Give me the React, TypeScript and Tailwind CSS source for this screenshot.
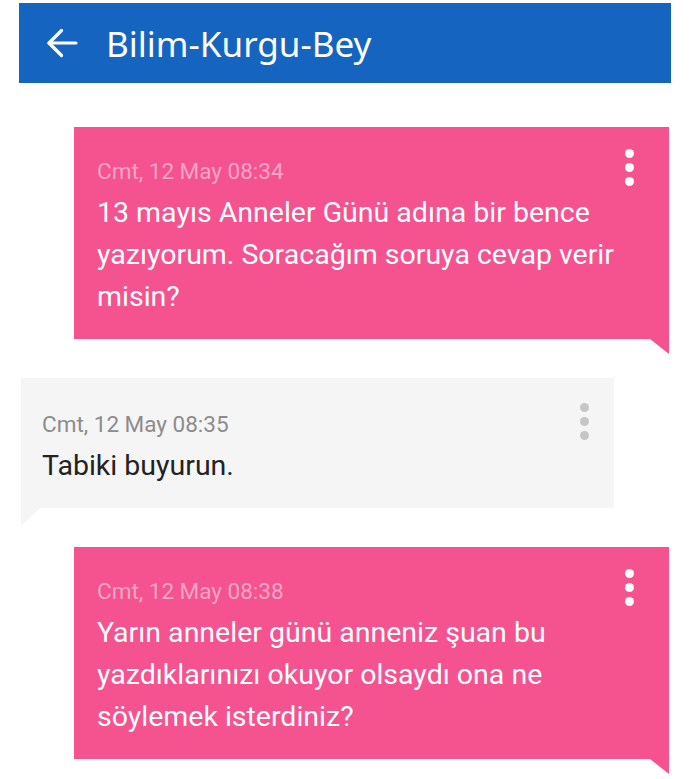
type Msg = { time: string; text: string; mine: boolean };

const messages: Msg[] = [
  {
    time: "Cmt, 12 May 08:34",
    text: "13 mayıs Anneler Günü adına bir bence yazıyorum. Soracağım soruya cevap verir misin?",
    mine: true,
  },
  { time: "Cmt, 12 May 08:35", text: "Tabiki buyurun.", mine: false },
  {
    time: "Cmt, 12 May 08:38",
    text: "Yarın anneler günü anneniz şuan bu yazdıklarınızı okuyor olsaydı ona ne söylemek isterdiniz?",
    mine: true,
  },
];

function Dots({ mine }: { mine: boolean }) {
  const c = mine ? "bg-white" : "bg-[#c6c6c6]";
  return (
    <div
      className={`absolute flex flex-col gap-[5px] ${
        mine ? "top-[22px] right-[35px]" : "top-[25px] right-[25px]"
      }`}
    >
      <span className={`w-[9px] h-[9px] rounded-full ${c}`} />
      <span className={`w-[9px] h-[9px] rounded-full ${c}`} />
      <span className={`w-[9px] h-[9px] rounded-full ${c}`} />
    </div>
  );
}

function Bubble({ msg }: { msg: Msg }) {
  if (msg.mine) {
    return (
      <div className="relative ml-[74px] mr-[21px] bg-[#f55290] pl-[23px] pt-[29px] pb-[21px]">
        <div className="w-[545px]">
          <div className="text-[22.5px] leading-[30px] text-[#fba6c6]">{msg.time}</div>
          <p className="mt-[6px] text-[28.5px] leading-[42px] text-white">{msg.text}</p>
        </div>
        <Dots mine />
        <svg className="absolute right-0 top-full" width="19" height="15" viewBox="0 0 19 15">
          <polygon points="0,0 19,0 19,15" fill="#f55290" />
        </svg>
      </div>
    );
  }
  return (
    <div className="relative ml-[21px] mr-[76px] bg-[#f5f5f5] pl-[21px] pt-[31px] pb-[21px]">
      <div className="w-[520px]">
        <div className="text-[22.5px] leading-[30px] text-[#8c8c8c]">{msg.time}</div>
        <p className="mt-[6px] text-[28.5px] leading-[42px] text-[#222222]">{msg.text}</p>
      </div>
      <Dots mine={false} />
      <svg className="absolute left-0 top-full" width="19" height="18" viewBox="0 0 19 18">
        <polygon points="0,0 19,0 0,18" fill="#f5f5f5" />
      </svg>
    </div>
  );
}

export default function App() {
  return (
    <div className="w-[690px] h-[779px] overflow-hidden bg-white font-['Roboto',sans-serif]">
      <header className="mx-[19px] mt-[3px] h-[80px] bg-[#1565c0] flex items-center pl-[27px] text-white">
        <svg width="32" height="30" viewBox="0 0 32 30" fill="none" stroke="white" strokeWidth="3.2" strokeLinecap="round" strokeLinejoin="round">
          <path d="M30 15H3" />
          <path d="M15.5 2.5 3 15l12.5 12.5" />
        </svg>
        <h1 className="ml-[28px] text-[35px] leading-none font-['Noto_Sans',sans-serif]">Bilim-Kurgu-Bey</h1>
      </header>
      <div className="flex flex-col gap-[39px] mt-[44px]">
        {messages.map((m, i) => (
          <Bubble key={i} msg={m} />
        ))}
      </div>
    </div>
  );
}
